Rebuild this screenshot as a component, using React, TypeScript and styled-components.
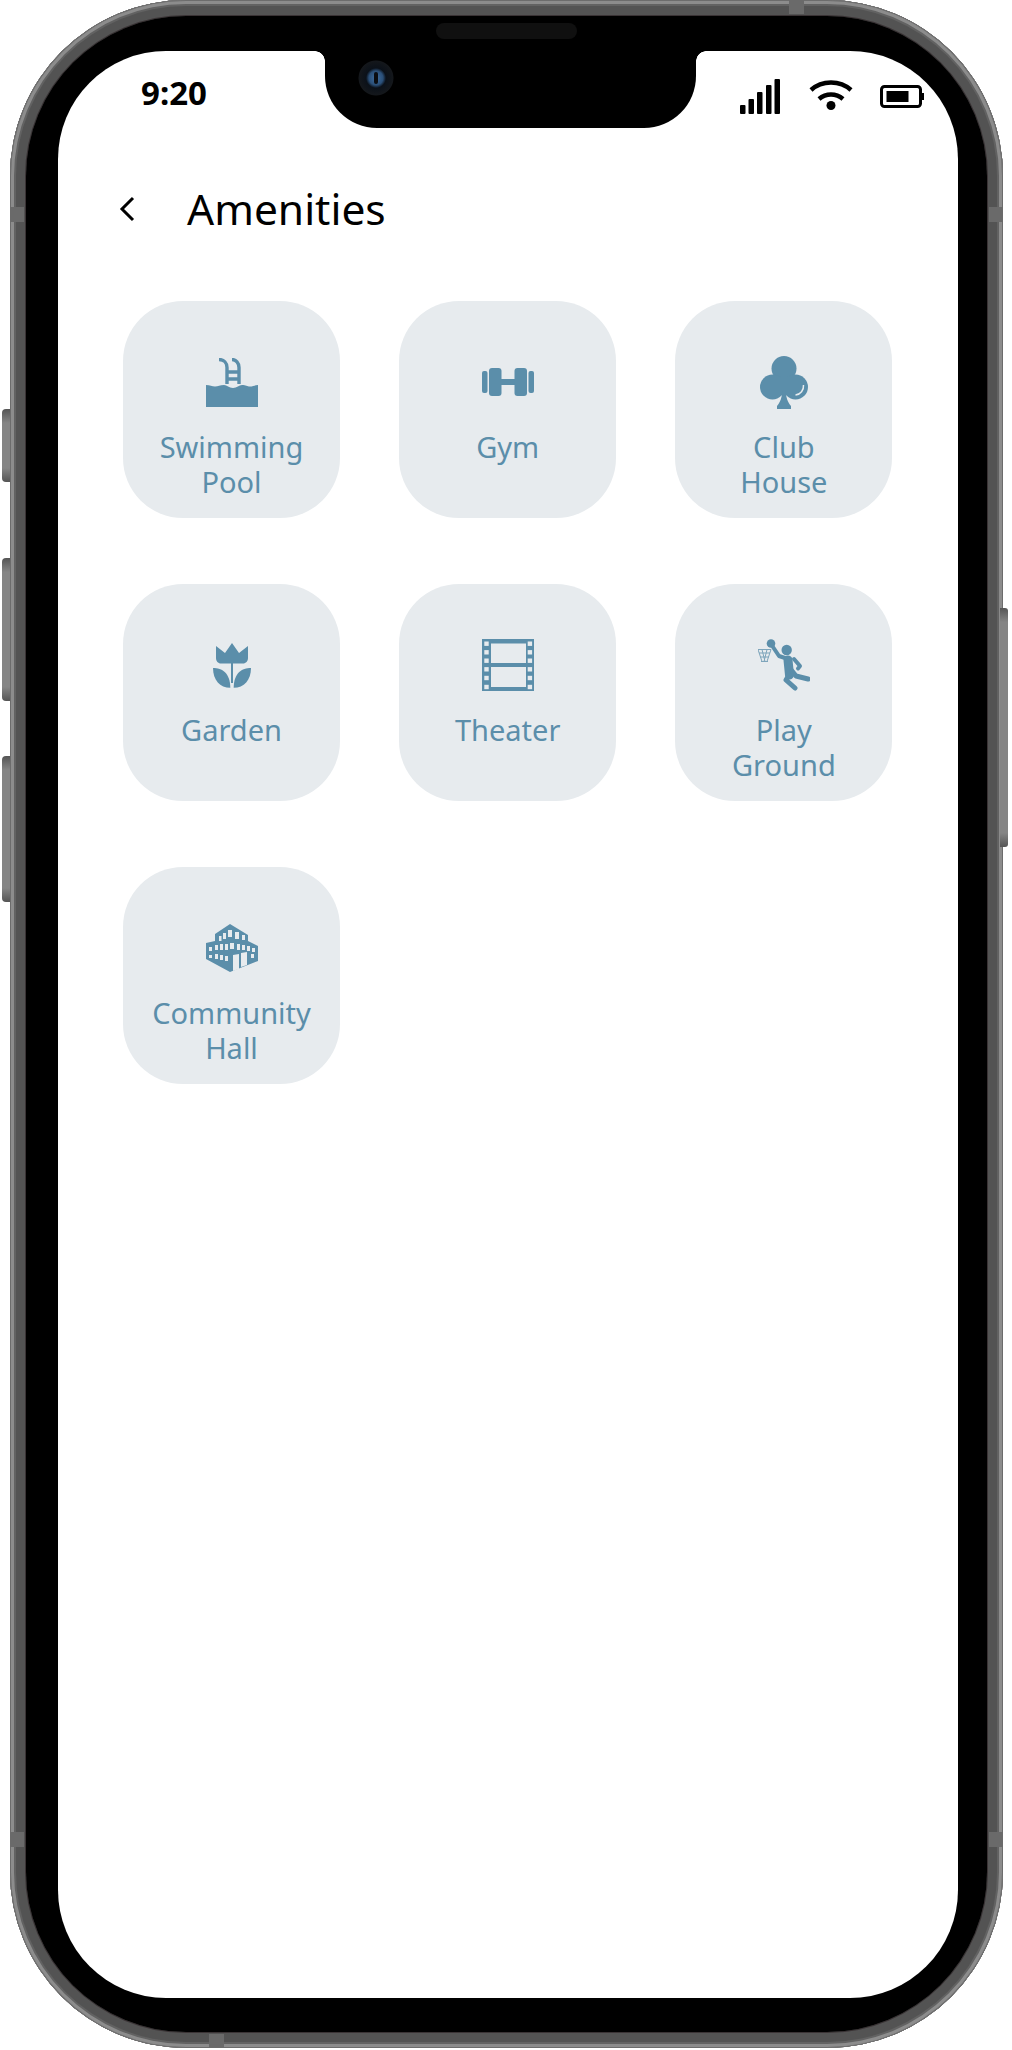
import React, { FC, ReactNode } from 'react';
import styled, { createGlobalStyle } from 'styled-components';

const ACCENT = '#5b8eaa';
const TILE = '#e7ebee';

const GlobalStyle = createGlobalStyle`
    html, body {
        margin: 0;
        padding: 0;
        background: #fff;
        font-family: "Noto Sans", "Open Sans", sans-serif;
    }
`;

const Page = styled.div`
    width: 1012px;
    height: 2050px;
    padding-left: 10px;
    box-sizing: border-box;
    overflow: hidden;
`;

const Phone = styled.div`
    position: relative;
    width: 993px;
    height: 2048px;
    box-sizing: border-box;
    padding: 16px;
    border-radius: 176px;
    background: #545454;
    box-shadow:
        inset 0 0 0 1px #6c6c6c,
        inset 0 0 0 4px #8c8c8c,
        inset 0 0 0 6px #626262,
        inset 0 0 0 15px #535353,
        inset 0 0 0 16px #3a3335;
`;

const Bezel = styled.div`
    height: 100%;
    box-sizing: border-box;
    padding: 35px 29px 34px 32px;
    border-radius: 160px;
    background: #000;
`;

const Screen = styled.div`
    position: relative;
    height: 100%;
    background: #fff;
    border-radius: 108px;
    overflow: hidden;
`;

const SideButton = styled.div<{ $top: number; $height: number; $right?: boolean }>`
    position: absolute;
    top: ${({ $top }) => $top}px;
    height: ${({ $height }) => $height}px;
    width: 8px;
    ${({ $right }) => ($right ? 'right: -5px;' : 'left: -8px;')}
    border-radius: ${({ $right }) => ($right ? '0 3px 3px 0' : '4px 0 0 4px')};
    background: linear-gradient(180deg, #555 0, #858585 14px, #858585 calc(100% - 14px), #555 100%);
`;

const EdgeBand = styled.div<{ $top?: number; $bottom?: number; $left?: number; $right?: number; $vertical?: boolean }>`
    position: absolute;
    background: #6a6a6a;
    ${({ $top }) => ($top !== undefined ? `top: ${$top}px;` : '')}
    ${({ $bottom }) => ($bottom !== undefined ? `bottom: ${$bottom}px;` : '')}
    ${({ $left }) => ($left !== undefined ? `left: ${$left}px;` : '')}
    ${({ $right }) => ($right !== undefined ? `right: ${$right}px;` : '')}
    width: ${({ $vertical }) => ($vertical ? '14px' : '15px')};
    height: ${({ $vertical }) => ($vertical ? '15px' : '14px')};
`;

const Speaker = styled.div`
    position: absolute;
    z-index: 2;
    top: 23px;
    left: 426px;
    width: 141px;
    height: 16px;
    border-radius: 8px;
    background: #101010;
`;

const Notch = styled.div`
    position: absolute;
    top: 0;
    left: 267px;
    width: 371px;
    height: 77px;
    background: #000;
    border-radius: 0 0 52px 52px;

    &::before,
    &::after {
        content: '';
        position: absolute;
        top: 0;
        width: 10px;
        height: 10px;
    }
    &::before {
        left: -10px;
        background: radial-gradient(circle at 0 100%, transparent 9.5px, #000 10px);
    }
    &::after {
        right: -10px;
        background: radial-gradient(circle at 100% 100%, transparent 9.5px, #000 10px);
    }
`;

const Camera = styled.div`
    position: absolute;
    top: 9px;
    left: 33px;
    width: 36px;
    height: 36px;
    border-radius: 50%;
    background: radial-gradient(circle, #3f6d9e 0, #2a4f78 7px, #0b1119 10px, #14171b 17px, #000 18px);

    &::after {
        content: '';
        position: absolute;
        top: 12px;
        left: 16px;
        width: 4px;
        height: 12px;
        border-radius: 2px;
        background: #0a0d12;
    }
`;

const StatusBar = styled.div`
    height: 79px;
    box-sizing: border-box;
    padding: 28px 34px 0 83px;
    display: flex;
    justify-content: space-between;
    align-items: flex-start;
`;

const Time = styled.span`
    font-size: 33px;
    line-height: 28px;
    font-weight: 700;
    color: #000;
`;

const StatusIcons = styled.div`
    display: flex;
    align-items: flex-start;
`;

const Signal = styled.svg`
    width: 40px;
    height: 35px;
`;

const Wifi = styled.svg`
    width: 44px;
    height: 31px;
    margin: 0 0 0 29px;
`;

const Battery = styled.svg`
    width: 44px;
    height: 23px;
    margin: 6px 0 0 27px;
`;

const Header = styled.header`
    height: 60px;
    margin-top: 49px;
    padding-left: 61px;
    display: flex;
    align-items: center;
`;

const BackIcon = styled.svg`
    width: 16px;
    height: 26px;
`;

const Title = styled.h1`
    margin: 0 0 0 52px;
    font-size: 42.5px;
    line-height: 60px;
    font-weight: 400;
    color: #000;
`;

const Grid = styled.div`
    margin-top: 62px;
    padding-left: 65px;
    display: grid;
    grid-template-columns: repeat(3, 217px);
    grid-auto-rows: 217px;
    column-gap: 59.2px;
    row-gap: 66px;
`;

const Tile = styled.div`
    box-sizing: border-box;
    padding-top: 54px;
    border-radius: 60px;
    background: ${TILE};
    color: ${ACCENT};
    display: flex;
    flex-direction: column;
    align-items: center;
    text-align: center;
`;

const IconBox = styled.div`
    height: 54px;
    display: flex;
    align-items: center;
    justify-content: center;
`;

const Label = styled.span`
    margin-top: 20px;
    font-size: 29px;
    line-height: 35px;
    white-space: pre-line;
`;

const PoolIcon: FC = () => (
    <svg width="52" height="49" viewBox="0 0 52 49">
        <g fill="none" stroke={ACCENT} strokeWidth="3.4">
            <path d="M13 1.500c5 0 8 3.500 8 8V26" />
            <path d="M26 1.500c4 0 7 3.500 7 8V26" />
            <path d="M21 14h12M21 21h12" />
        </g>
        <path fill={ACCENT} d="M0 27c4 0 6 1.500 9 1.500s5-1.500 9-1.500c3 0 5 3 9 3s6-3 9-3c4 0 5 1.500 8 1.500 3 0 5-1.500 8-1.500v22H0z" />
    </svg>
);

const GymIcon: FC = () => (
    <svg width="52" height="28" viewBox="0 0 52 28" fill={ACCENT}>
        <rect x="0" y="3" width="5.500" height="22" rx="2" />
        <rect x="7" y="0" width="12.500" height="28" rx="3" />
        <rect x="19" y="11" width="14" height="6" />
        <rect x="32.500" y="0" width="12.500" height="28" rx="3" />
        <rect x="46.500" y="3" width="5.500" height="22" rx="2" />
    </svg>
);

const ClubIcon: FC = () => (
    <svg width="48" height="53" viewBox="0 0 48 53" fill={ACCENT}>
        <circle cx="24" cy="12.500" r="12.500" />
        <circle cx="12.500" cy="31" r="12.500" />
        <circle cx="35.500" cy="31" r="12.500" />
        <rect x="18" y="22" width="12" height="14" />
        <path d="M22.500 34h3c.5 7 2 12 5.500 16v3H17v-3c3.500-4 5-9 5.500-16z" />
        <path d="M43.500 29c.5 5-3 9.500-8 10" fill="none" stroke={TILE} strokeWidth="1.500" />
    </svg>
);

const TulipIcon: FC = () => (
    <svg width="38" height="45" viewBox="0 0 38 45" fill={ACCENT}>
        <path d="M3 3l9 7 7-10 7 10 9-7v12c0 3-2 5.500-5 5.500H8c-3 0-5-2.500-5-5.500z" />
        <rect x="18" y="20" width="2" height="20" />
        <path d="M0 25c9 0 17.300 5 17.300 19.800C7 44.800 0 37 0 25z" />
        <path d="M38 25c-9 0-17.300 5-17.300 19.800C31 44.800 38 37 38 25z" />
    </svg>
);

const sprockets = [2.5, 11.1, 19.5, 28.1, 36.8, 45.8];

const FilmIcon: FC = () => (
    <svg width="52" height="52" viewBox="0 0 52 52">
        <rect width="52" height="52" fill={ACCENT} />
        <rect x="9" y="4.500" width="35" height="19.500" fill={TILE} />
        <rect x="9" y="28" width="35" height="20" fill={TILE} />
        {sprockets.map((y) => (
            <React.Fragment key={y}>
                <rect x="2.300" y={y} width="4.400" height="4.400" fill={TILE} />
                <rect x="45.700" y={y} width="4.400" height="4.400" fill={TILE} />
            </React.Fragment>
        ))}
    </svg>
);

const PlayerIcon: FC = () => (
    <svg width="52" height="52" viewBox="0 0 52 52">
        <circle cx="13" cy="4.500" r="4.300" fill={ACCENT} />
        <circle cx="28.700" cy="11" r="5.200" fill={ACCENT} />
        <g fill="none" stroke={ACCENT} strokeWidth="1" opacity="0.75">
            <path d="M0 10.500h13M1 14h11M2 18h9M3 22.500h7" />
            <path d="M0 10.500l4 12M4 10.500l3 12M9 10.500l-3 12M13 10.500l-4 12" />
        </g>
        <g fill="none" stroke={ACCENT} strokeLinecap="round" strokeLinejoin="round">
            <path d="M15 8l6 9 9 3" strokeWidth="4" />
            <path d="M30 21l1.500 15" strokeWidth="9" />
            <path d="M36 20l6 7-2 2.500" strokeWidth="4" />
            <path d="M31 36l-3 5 9 8" strokeWidth="5" />
            <path d="M34 32l4 5 12 3" strokeWidth="5" />
        </g>
    </svg>
);

const windows = [
    [13, 12, 2.500, 5], [17, 9, 3, 6], [22, 6, 4, 7], [29, 8, 4, 7], [36, 11, 3, 5],
    [3, 23, 3, 4], [9, 21, 3, 5], [14, 20, 3, 6], [19, 20, 3, 6], [24, 19, 4, 6], [31, 20, 3, 6], [36, 21, 3, 5], [41, 22, 3, 5], [46, 24, 3, 4],
    [3, 31, 3, 3], [9, 30, 3, 5], [14, 31, 3, 5], [19, 32, 3, 5], [45, 30, 3, 4],
];

const BuildingIcon: FC = () => (
    <svg width="52" height="48" viewBox="0 0 52 48">
        <path fill={ACCENT} d="M24 0l18 11v6l10 5v15L24 48 0 35V19l9-2v-7z" />
        {windows.map(([x, y, w, h]) => (
            <rect key={`${x}-${y}`} x={x} y={y} width={w} height={h} fill={TILE} />
        ))}
        <path fill={TILE} d="M27 31l6-1v15l-6 2zM35 29l6-1v13l-6 2z" />
    </svg>
);

interface Amenity {
    label: string;
    icon: ReactNode;
}

const amenities: Amenity[] = [
    { label: 'Swimming\nPool', icon: <PoolIcon /> },
    { label: 'Gym', icon: <GymIcon /> },
    { label: 'Club\nHouse', icon: <ClubIcon /> },
    { label: 'Garden', icon: <TulipIcon /> },
    { label: 'Theater', icon: <FilmIcon /> },
    { label: 'Play\nGround', icon: <PlayerIcon /> },
    { label: 'Community\nHall', icon: <BuildingIcon /> },
];

const App: FC = () => (
    <Page>
        <GlobalStyle />
        <Phone>
            <SideButton $top={409} $height={73} />
            <SideButton $top={558} $height={143} />
            <SideButton $top={756} $height={146} />
            <SideButton $top={608} $height={239} $right />
            <EdgeBand $top={207} $left={0} $vertical />
            <EdgeBand $top={207} $right={0} $vertical />
            <EdgeBand $top={1832} $left={0} $vertical />
            <EdgeBand $top={1832} $right={0} $vertical />
            <EdgeBand $top={0} $left={779} />
            <EdgeBand $bottom={0} $left={199} />
            <Speaker />
            <Bezel>
                <Screen>
                    <Notch>
                        <Camera />
                    </Notch>
                    <StatusBar>
                        <Time>9:20</Time>
                        <StatusIcons>
                            <Signal viewBox="0 0 40 35" fill="#000">
                                <rect x="0" y="26" width="5.500" height="9" rx="1" />
                                <rect x="8.500" y="20" width="5.500" height="15" rx="1" />
                                <rect x="17" y="13" width="5.500" height="22" rx="1" />
                                <rect x="26" y="6" width="5.500" height="29" rx="1" />
                                <rect x="34.500" y="0" width="5.500" height="35" rx="1" />
                            </Signal>
                            <Wifi viewBox="0 0 44 31" fill="none" stroke="#000" strokeWidth="4.500">
                                <path d="M2 11C13 1 31 1 42 11" />
                                <path d="M10 20c7-6 17-6 24 0" />
                                <circle cx="22" cy="26.500" r="4.500" fill="#000" stroke="none" />
                            </Wifi>
                            <Battery viewBox="0 0 44 23">
                                <rect x="1.500" y="1.500" width="39" height="20" rx="3" fill="none" stroke="#000" strokeWidth="3" />
                                <rect x="6.500" y="6" width="22" height="11" fill="#000" />
                                <rect x="41" y="8" width="3" height="7" fill="#000" />
                            </Battery>
                        </StatusIcons>
                    </StatusBar>
                    <Header>
                        <BackIcon viewBox="0 0 16 26" fill="none" stroke="#000" strokeWidth="3">
                            <path d="M14 2L3 13l11 11" />
                        </BackIcon>
                        <Title>Amenities</Title>
                    </Header>
                    <Grid>
                        {amenities.map(({ label, icon }) => (
                            <Tile key={label}>
                                <IconBox>{icon}</IconBox>
                                <Label>{label}</Label>
                            </Tile>
                        ))}
                    </Grid>
                </Screen>
            </Bezel>
        </Phone>
    </Page>
);

export default App;
